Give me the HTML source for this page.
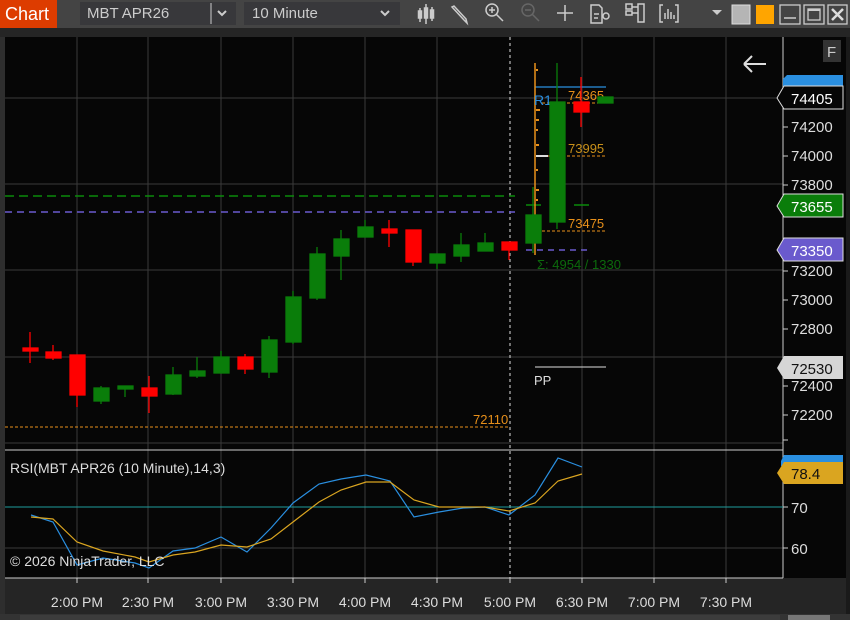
<!DOCTYPE html>
<html><head><meta charset="utf-8"><style>
html,body{margin:0;padding:0;background:#2a2a2a;width:850px;height:620px;overflow:hidden}
svg text{font-family:"Liberation Sans",sans-serif}
</style></head><body>
<svg width="850" height="620" viewBox="0 0 850 620" xmlns="http://www.w3.org/2000/svg">
<rect width="850" height="620" fill="#252525"/>
<!-- toolbar -->
<rect x="0" y="0" width="850" height="28" fill="#444444"/>
<rect x="0" y="0" width="57" height="28" fill="#dd3c00"/>
<text x="5" y="20" font-size="18" fill="#fff">Chart</text>
<rect x="80" y="2" width="156" height="23" fill="#38383b"/>
<line x1="211" y1="3" x2="211" y2="24" stroke="#ccc"/>
<text x="87" y="18" font-size="15" fill="#ccc">MBT APR26</text>
<path d="M218 11 l4 4 l4 -4" stroke="#ccc" stroke-width="2" fill="none"/>
<rect x="244" y="2" width="156" height="23" fill="#38383b"/>
<text x="252" y="18" font-size="15" fill="#ccc">10 Minute</text>
<path d="M381 11 l4 4 l4 -4" stroke="#ccc" stroke-width="2" fill="none"/>
<g stroke="#ccc" fill="none" stroke-width="1.5">
<path d="M420 8v14M426 4v20M432 7v14"/><rect x="418.5" y="11" width="3" height="7" fill="#ccc"/><rect x="424.5" y="8" width="3" height="10" fill="#ccc"/><rect x="430.5" y="10" width="3" height="8" fill="#ccc"/>
<path d="M452 7l12 13l3 3l-1-4l-12-13z"/>
<circle cx="492" cy="10" r="6"/><path d="M496 14l7 7M489 10h6M492 7v6"/>
<g stroke="#666"><circle cx="528" cy="10" r="6"/><path d="M532 14l7 7M525 10h6"/></g>
<path d="M565 5v16M557 13h16"/>
<path d="M591 5h8l3 3v15h-11z M594 14h5M594 18h4"/><circle cx="606" cy="16" r="3"/>
<path d="M626 4h6v5h-6zM626 11h6v4h-6zM638 4h6v18h-6zM632 7h6M632 13h6"/>
<path d="M663 5h-3v17h3M675 5h3v17h-3M665 19v-6M668 19v-10M671 19v-7M674 19v-4"/>
</g>
<path d="M712 10h10l-5 5z" fill="#ccc"/>
<rect x="732" y="5" width="18" height="19" fill="#b5b5b5" stroke="#ddd"/>
<rect x="756" y="5" width="18" height="19" fill="#ffa500"/>
<rect x="780" y="5" width="20" height="19" fill="none" stroke="#ccc" stroke-width="1.3"/><path d="M784 18h12" stroke="#ccc" stroke-width="1.5"/>
<rect x="804" y="5" width="20" height="19" fill="none" stroke="#ccc" stroke-width="1.3"/><rect x="808" y="9" width="12" height="11" fill="none" stroke="#ccc" stroke-width="1.3"/><path d="M808 10h12" stroke="#ccc" stroke-width="2"/>
<rect x="828" y="5" width="19" height="19" fill="none" stroke="#ccc" stroke-width="1.3"/><path d="M832 9l11 11M843 9l-11 11" stroke="#ddd" stroke-width="2.5"/>

<!-- plot area -->
<rect x="5" y="37" width="778" height="541" fill="#060606"/>
<rect x="783" y="37" width="63" height="541" fill="#060606"/>
<rect x="846" y="37" width="4" height="583" fill="#1a1a1a"/>
<rect x="0" y="37" width="5" height="583" fill="#2e2e2e"/>
<g stroke="#3a3a3a" stroke-width="1">
<path d="M77 37v541M148 37v541M221 37v541M293 37v541M365 37v541M437 37v541M582 37v541M654 37v541M726 37v541"/>
<path d="M5 98h778M5 184h778M5 270h778M5 357h778M5 443h778M5 507h778M5 548h778"/>
</g>
<path d="M510 37v541" stroke="#ddd" stroke-dasharray="3,3"/>
<path d="M5 450h778" stroke="#ccc"/>
<path d="M5 578h778" stroke="#ccc"/>
<path d="M783 37v541" stroke="#ccc"/>
<path d="M5 507h778" stroke="#1f9c9c"/>

<!-- dashed lines -->
<path d="M5 196h510" stroke="#0a8a0a" stroke-width="1.5" stroke-dasharray="9,5"/>
<path d="M5 212h510" stroke="#6a5acd" stroke-width="1.5" stroke-dasharray="7,5"/>
<path d="M526 205h15M574 205h15" stroke="#0a8a0a" stroke-width="1.5"/>
<path d="M526 250h62" stroke="#6a5acd" stroke-width="1.5" stroke-dasharray="6,5"/>
<path d="M5 427h505" stroke="#e8901a" stroke-dasharray="3,2"/>
<text x="473" y="424" font-size="13" fill="#e8901a">72110</text>
<path d="M542 103h63M542 156h63M542 231h63" stroke="#e8901a" stroke-dasharray="3,2"/>
<path d="M535 87h71" stroke="#2a8fe0" stroke-width="1.2"/>
<path d="M535 63v192" stroke="#e8901a" stroke-width="1.5"/>
<path d="M536 70h2M536 110h4M536 120h3M536 130h2M536 145h3M536 170h2M536 190h3M536 200h2" stroke="#e8901a" stroke-width="2"/>
<path d="M536 156h12" stroke="#ddd" stroke-width="2"/>
<text x="534" y="105" font-size="14" fill="#2a8fe0">R1</text>
<text x="568" y="100" font-size="13" fill="#e8901a">74365</text>
<text x="568" y="153" font-size="13" fill="#c8901a">73995</text>
<text x="568" y="228" font-size="13" fill="#e8901a">73475</text>
<text x="537" y="269" font-size="13" fill="#0c6a0c">Σ: 4954 / 1330</text>
<path d="M535 367h71" stroke="#ddd"/>
<text x="534" y="385" font-size="13" fill="#ddd">PP</text>

<!-- candles -->
<g stroke-width="1.3">
<g stroke="#ff0000" fill="#ff0000">
<path d="M30 332v31M53 345v15M77 355v52M149 376v37M245 354v20M389 220v27M413 230v36M509 242v18M581 77v50"/>
<rect x="23" y="348" width="15" height="3"/><rect x="46" y="352" width="15" height="6"/><rect x="70" y="355" width="15" height="40"/><rect x="142" y="388" width="15" height="8"/><rect x="238" y="357" width="15" height="12"/><rect x="382" y="229" width="15" height="4"/><rect x="406" y="230" width="15" height="32"/><rect x="502" y="242" width="15" height="8"/><rect x="574" y="102" width="15" height="10"/>
</g>
<g stroke="#0a7d0a" fill="#0a7d0a">
<path d="M101 386v18M125 386v11M173 367v28M197 357v21M221 351v22M269 336v42M293 291v53M317 247v53M341 230v50M365 220v17M437 254v15M461 233v29M485 233v18M533 187v66M557 63v166"/>
<rect x="94" y="388" width="15" height="13"/><rect x="118" y="386" width="15" height="3"/><rect x="166" y="375" width="15" height="19"/><rect x="190" y="371" width="15" height="5"/><rect x="214" y="357" width="15" height="16"/><rect x="262" y="340" width="15" height="32"/><rect x="286" y="297" width="15" height="45"/><rect x="310" y="254" width="15" height="44"/><rect x="334" y="239" width="15" height="17"/><rect x="358" y="227" width="15" height="10"/><rect x="430" y="254" width="15" height="9"/><rect x="454" y="245" width="15" height="11"/><rect x="478" y="243" width="15" height="8"/><rect x="526" y="215" width="15" height="28"/><rect x="550" y="102" width="15" height="120"/><rect x="598" y="97" width="15" height="6"/>
</g>
</g>

<!-- back arrow & F -->
<path d="M744 64h22M744 64l8-8M744 64l8 8" stroke="#ddd" stroke-width="2" fill="none"/>
<rect x="823" y="40" width="18" height="22" fill="#333"/>
<text x="827" y="57" font-size="15" fill="#ccc">F</text>

<!-- price axis -->
<g fill="#ddd" font-size="15">
<path d="M783 127h5M783 156h5M783 185h5M783 271h5M783 300h5M783 329h5M783 386h5M783 415h5M783 440h5" stroke="#ccc"/>
<text x="791" y="132">74200</text><text x="791" y="161">74000</text><text x="791" y="190">73800</text>
<text x="791" y="276">73200</text><text x="791" y="305">73000</text><text x="791" y="334">72800</text>
<text x="791" y="391">72400</text><text x="791" y="420">72200</text>
</g>
<path d="M783 79l4-4h56v13h-60z" fill="#2a8fe0"/>
<path d="M777 98l7-12h59v23h-59z" fill="#060606" stroke="#ddd"/>
<text x="791" y="104" font-size="15" fill="#fff">74405</text>
<path d="M777 206l7-12h59v23h-59z" fill="#0a7d0a" stroke="#ddd"/>
<text x="791" y="212" font-size="15" fill="#fff">73655</text>
<path d="M777 250l7-12h59v23h-59z" fill="#6a5acd" stroke="#ddd"/>
<text x="791" y="256" font-size="15" fill="#fff">73350</text>
<path d="M777 368l7-12h59v23h-59z" fill="#d6d6d6"/>
<text x="791" y="374" font-size="15" fill="#111">72530</text>

<!-- RSI -->
<text x="10" y="473" font-size="14" fill="#ddd">RSI(MBT APR26 (10 Minute),14,3)</text>
<path d="M783 507h5M783 548h5" stroke="#ccc"/>
<text x="791" y="513" font-size="15" fill="#ddd">70</text>
<text x="791" y="554" font-size="15" fill="#ddd">60</text>
<path d="M781 461l3-6h59v11h-62z" fill="#2a8fe0"/>
<path d="M777 473l7-11h59v22h-59z" fill="#daa520"/>
<text x="791" y="479" font-size="15" fill="#111">78.4</text>
<polyline fill="none" stroke="#2a8fe0" stroke-width="1.2" points="31,515 53,522 77,565 103,558 135,563 149,568 173,551 195,548 221,537 247,552 271,528 293,503 319,484 341,479 366,475 390,481 414,517 439,512 463,508 485,507 509,515 535,495 558,458 582,467"/>
<polyline fill="none" stroke="#daa520" stroke-width="1.2" points="31,517 53,519 77,542 103,551 135,557 149,562 173,555 195,552 221,545 247,547 271,539 293,522 319,502 341,490 366,482 390,482 414,500 439,507 463,507 485,507 509,511 535,503 558,481 582,474"/>
<text x="10" y="566" font-size="14" fill="#ddd">© 2026 NinjaTrader, LLC</text>

<!-- time axis -->
<path d="M77 578v5M148 578v5M221 578v5M293 578v5M365 578v5M437 578v5M510 578v5M582 578v5M654 578v5M726 578v5" stroke="#ccc"/>
<g fill="#ddd" font-size="14" text-anchor="middle">
<text x="77" y="607">2:00 PM</text><text x="148" y="607">2:30 PM</text><text x="221" y="607">3:00 PM</text><text x="293" y="607">3:30 PM</text><text x="365" y="607">4:00 PM</text><text x="437" y="607">4:30 PM</text><text x="510" y="607">5:00 PM</text><text x="582" y="607">6:30 PM</text><text x="654" y="607">7:00 PM</text><text x="726" y="607">7:30 PM</text>
</g>
<rect x="0" y="614" width="850" height="6" fill="#333"/>
<rect x="20" y="615" width="760" height="5" fill="#3c3c3c"/>
<rect x="788" y="615" width="42" height="5" fill="#777"/>
</svg>
</body></html>
